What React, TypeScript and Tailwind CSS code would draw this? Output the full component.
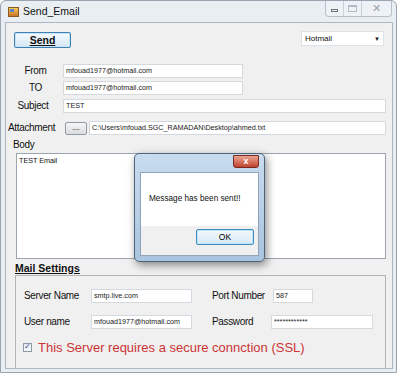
import React from 'react';

const Field: React.FC<{ w: string; value: string; className?: string }> = ({ w, value, className }) => (
  <div className={`${w} h-[14px] shrink-0 bg-white border border-[#d3d9df] flex items-center px-[2px] text-[7.2px] tracking-normal text-[#222] leading-none whitespace-nowrap overflow-hidden ${className ?? ''}`}>
    {value}
  </div>
);

export default function App() {
  return (
    <div className="w-[400px] h-[375px] bg-white overflow-hidden relative" style={{ fontFamily: '"Liberation Sans", Arial, sans-serif' }}>
      {/* window */}
      <div className="w-[397px] h-[373px] border border-[#9aa5b1] rounded-t-[6px] bg-[#e9eef3] flex flex-col">
        {/* title bar */}
        <div className="h-[21px] shrink-0 flex items-center relative">
          <div className="ml-[7px] w-[11px] h-[10px] bg-gradient-to-b from-[#f7c85a] to-[#c9772a] border border-[#8a5a22] relative">
            <div className="absolute left-[1px] top-[1px] w-[4px] h-[3px] bg-[#5e86c2]" />
          </div>
          <span className="ml-[4px] text-[10.5px] text-[#111] leading-none">Send_Email</span>
          <div className="absolute right-[4px] top-[0px] flex h-[16px] border border-t-0 border-[#b7c0ca] rounded-b-[4px] bg-[#eef2f6] overflow-hidden">
            <div className="w-[18px] flex items-center justify-center border-r border-[#c8d0d8]">
              <div className="w-[7px] h-[3px] border border-[#6b7580] mt-[4px]" />
            </div>
            <div className="w-[18px] flex items-center justify-center border-r border-[#c8d0d8]">
              <div className="w-[9px] h-[7px] border border-[#b3bbc4] border-t-2" />
            </div>
            <div className="w-[29px] flex items-center justify-center text-[11px] text-[#9aa3ad] leading-none">✕</div>
          </div>
        </div>
        {/* client area */}
        <div className="ml-[4px] mr-[3px] mb-[3px] flex-1 bg-[#f0f0f0] border border-[#aeb8c2] flex flex-col text-[#111] text-[10px] tracking-[-0.35px] leading-none whitespace-nowrap">
          <div className="h-[17px] flex justify-between items-start mt-[8px]">
            <button className="ml-[8px] mt-[1px] w-[57px] h-[16px] border border-[#3c7fb1] rounded-[2px] bg-gradient-to-b from-[#f4f9fd] to-[#d6e8f4] text-[10.5px] tracking-normal font-bold underline leading-none shadow-[inset_0_0_0_1px_#c6e3f7]">
              Send
            </button>
            <div className="mr-[8px] w-[83px] h-[15px] bg-white border border-[#dde2e7] flex items-center justify-between px-[3px] text-[8px] tracking-normal">
              <span>Hotmail</span>
              <span className="text-[6px]">▼</span>
            </div>
          </div>
          {/* From */}
          <div className="h-[14px] flex items-center mt-[16px]">
            <div className="w-[57px] text-center pl-[2px]">From</div>
            <Field w="w-[180px]" value="mfouad1977@hotmail.com" />
          </div>
          <div className="h-[14px] flex items-center mt-[3px]">
            <div className="w-[57px] text-center pl-[2px]">TO</div>
            <Field w="w-[180px]" value="mfouad1977@hotmail.com" />
          </div>
          <div className="h-[14px] flex items-center mt-[4px]">
            <div className="w-[57px] text-center pr-[3px]">Subject</div>
            <Field w="w-[323px]" value="TEST" />
          </div>
          <div className="h-[14px] flex items-center mt-[8px]">
            <div className="w-[57px] pl-[2px]">Attachment</div>
            <div className="ml-[2px] w-[22px] h-[13px] border border-[#8e9aa6] rounded-[2px] bg-gradient-to-b from-[#f6f6f6] to-[#dcdcdc] text-[8px] flex items-center justify-center">....</div>
            <Field w="w-[297px]" value="C:\Users\mfouad.SGC_RAMADAN\Desktop\ahmed.txt" className="ml-[2px]" />
          </div>
          <div className="h-[12px] mt-[4px] ml-[7px] flex items-center">Body</div>
          <div className="ml-[10px] mt-[2px] w-[370px] h-[106px] shrink-0 bg-white border border-[#9ba4ad] px-[2px] pt-[3px] text-[7.2px] tracking-normal">TEST Email</div>
          <div className="h-[12px] ml-[9px] mt-[3px] flex items-center text-[10.5px] tracking-normal font-bold underline">Mail Settings</div>
          {/* group */}
          <div className="ml-[9px] mt-[1px] w-[371px] flex-1 border-t border-l border-r border-[#b4b4b4] flex flex-col">
            <div className="h-[14px] flex items-center mt-[13px]">
              <div className="w-[75px] pl-[8px]">Server Name</div>
              <Field w="w-[101px]" value="smtp.live.com" />
              <div className="ml-[20px] w-[61px]">Port Number</div>
              <Field w="w-[40px]" value="587" />
            </div>
            <div className="h-[14px] flex items-center mt-[12px]">
              <div className="w-[75px] pl-[8px]">User name</div>
              <Field w="w-[101px]" value="mfouad1977@hotmail.com" />
              <div className="ml-[20px] w-[59px]">Password</div>
              <Field w="w-[102px]" value="************" />
            </div>
            <div className="h-[12px] flex items-center mt-[12px]">
              <div className="ml-[7px] w-[9px] h-[9px] border border-[#8f9aa5] bg-gradient-to-b from-[#e4eaf0] to-[#f7f9fb] flex items-center justify-center text-[8px] text-[#3b4d8a]">✓</div>
              <span className="ml-[6px] text-[13px] tracking-normal text-[#cc3434]">This Server requires a secure connction (SSL)</span>
            </div>
          </div>
        </div>
      </div>

      {/* message box */}
      <div className="absolute left-[134px] top-[153px] w-[131px] h-[109px] rounded-[5px] border border-[#4e6478] bg-gradient-to-b from-[#c9dcef] to-[#a9c4de] shadow-[2px_3px_8px_rgba(0,0,0,0.45)] flex flex-col">
        <div className="h-[18px] relative">
          <div className="absolute right-[5px] top-[1px] w-[26px] h-[13px] rounded-b-[3px] border border-[#7a2a20] bg-gradient-to-b from-[#e8a493] to-[#c0412c] flex items-center justify-center text-white text-[9px] font-bold leading-none">x</div>
        </div>
        <div className="mx-[5px] mb-[5px] flex-1 border border-[#8fa4b8] flex flex-col">
          <div className="h-[53px] bg-white flex items-center pl-[8px] text-[8.2px] text-[#111] leading-none">Message has been sent!!</div>
          <div className="flex-1 bg-[#f0f0f0] flex justify-end items-start pr-[4px] pt-[3px]">
            <button className="w-[58px] h-[16px] border border-[#3c8fc0] rounded-[2px] bg-gradient-to-b from-[#f2f8fc] to-[#d8eaf6] text-[8.5px] leading-none shadow-[inset_0_0_0_1px_#bfe3f7]">OK</button>
          </div>
        </div>
      </div>
    </div>
  );
}
